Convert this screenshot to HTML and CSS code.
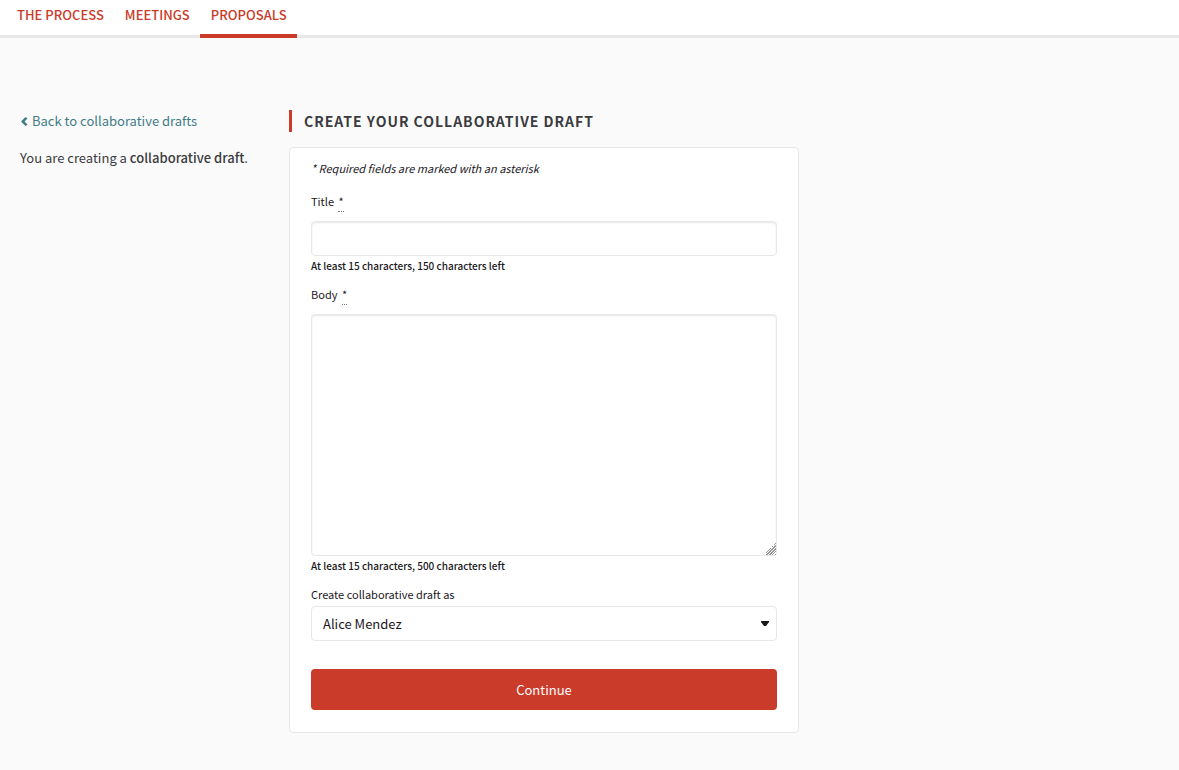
FILE: index.html
```html
<!DOCTYPE html>
<html lang="en">
<head>
<meta charset="utf-8">
<title>Create your collaborative draft</title>
<link rel="stylesheet" href="styles.css">
</head>
<body>
<nav class="process-nav" aria-label="Process">
  <a class="process-nav__link" href="#process">The process</a>
  <a class="process-nav__link" href="#meetings">Meetings</a>
  <a class="process-nav__link process-nav__link--active" href="#proposals" aria-current="page">Proposals</a>
</nav>
<div class="wrapper">
  <aside class="sidebar">
    <a class="back-link" href="#drafts"><svg class="back-link__icon" viewBox="0 0 8 9" aria-hidden="true"><path d="M5.500 0 1 4.500 5.500 9 7.500 7.500 4.500 4.500l3-3z"/></svg>Back to collaborative drafts</a>
    <p class="sidebar__text">You are creating a <strong>collaborative draft</strong>.</p>
  </aside>
  <main class="main">
    <h1 class="section-heading">Create your collaborative draft</h1>
    <form class="card">
      <p class="help-text">* Required fields are marked with an asterisk</p>
      <div class="field">
        <label class="field__label" for="title">Title <abbr class="required" title="Required field">*</abbr></label>
        <input class="control control--inset" id="title" type="text">
        <p class="counter">At least 15 characters, 150 characters left</p>
      </div>
      <div class="field">
        <label class="field__label" for="body">Body <abbr class="required" title="Required field">*</abbr></label>
        <textarea class="control control--inset control--area" id="body"></textarea>
        <p class="counter">At least 15 characters, 500 characters left</p>
      </div>
      <div class="field">
        <label class="field__label field__label--plain" for="author">Create collaborative draft as</label>
        <div class="select">
          <select class="control" id="author"><option>Alice Mendez</option></select>
          <svg class="select__arrow" viewBox="0 0 8 6" aria-hidden="true"><path d="M0 0h8v1L5 5H3L0 1z"/></svg>
        </div>
      </div>
      <button class="button" type="submit">Continue</button>
    </form>
  </main>
</div>
</body>
</html>
```
FILE: styles.css
```css
* { box-sizing: border-box; }

body {
  margin: 0;
  background: #fafafa;
  color: #3b3b40;
  font-family: "Noto Sans CJK SC", "Noto Sans", sans-serif;
  font-size: 13px;
  line-height: 20px;
}

p, h1 { margin: 0; }

.process-nav {
  display: flex;
  height: 38px;
  padding: 0 6px;
  background: #fff;
  border-bottom: 3px solid #e8e8e8;
}

.process-nav__link {
  height: 38px;
  padding: 5px 10px 0 11px;
  color: #cb3b29;
  font-weight: 500;
  text-decoration: none;
  text-transform: uppercase;
}

.process-nav__link--active { border-bottom: 4px solid #cb3b29; }

.wrapper {
  display: grid;
  grid-template-columns: repeat(12, 1fr);
  column-gap: 28px;
  max-width: 1068px;
  padding: 72px 0 36px 20px;
}

.sidebar { grid-column: span 3; padding-top: 1px; white-space: nowrap; }
.main { grid-column: span 6; }

.back-link {
  display: flex;
  align-items: center;
  gap: 4px;
  margin-bottom: 17px;
  color: #3f7c87;
  text-decoration: none;
}

.back-link__icon { width: 8px; height: 9px; fill: currentColor; }

.sidebar strong { font-weight: 500; }

.section-heading {
  margin-bottom: 15px;
  padding-left: 12px;
  border-left: 3px solid #cb3b29;
  font-size: 14px;
  font-weight: 700;
  line-height: 22px;
  letter-spacing: 1px;
  text-transform: uppercase;
}

.card {
  padding: 11px 21px 22px;
  background: #fff;
  border: 1px solid #e8e8e8;
  border-radius: 4px;
  color: #1a181d;
}

.help-text {
  margin-bottom: 15px;
  font-size: 11px;
  line-height: 18px;
  font-style: italic;
}

.field__label {
  display: block;
  height: 29px;
  font-size: 11px;
  line-height: 18px;
}

.field__label--plain { height: 21px; }

.required {
  display: inline-block;
  margin-left: 2px;
  padding-bottom: 1px;
  border-bottom: 1px dotted #77777a;
  line-height: 18px;
  text-decoration: none;
}

.control {
  display: block;
  width: 100%;
  height: 35px;
  padding: 0 11px;
  background: #fff;
  border: 1px solid #e8e8e8;
  border-radius: 4px;
  color: #1a181d;
  font: inherit;
}

.control--inset { box-shadow: inset 0 1px 2px rgba(26, 24, 29, 0.1); }
.control--area { height: 242px; padding: 8px 11px; resize: vertical; }

.control--area::-webkit-resizer {
  background: linear-gradient(135deg, #fff 60%, transparent 60%), repeating-linear-gradient(135deg, #999 0 1px, #fff 1px 2px);
}

.counter {
  margin-bottom: 9px;
  font-size: 10px;
  font-weight: 500;
}

.select { position: relative; }
.select .control { appearance: none; }

.select__arrow {
  position: absolute;
  top: 15px;
  right: 8px;
  width: 8px;
  height: 6px;
  fill: #1a181d;
  pointer-events: none;
}

.button {
  display: block;
  width: 100%;
  height: 41px;
  margin-top: 28px;
  padding: 0;
  background: #cb3b29;
  border: 0;
  border-radius: 4px;
  color: #fefefe;
  font: inherit;
}
```
